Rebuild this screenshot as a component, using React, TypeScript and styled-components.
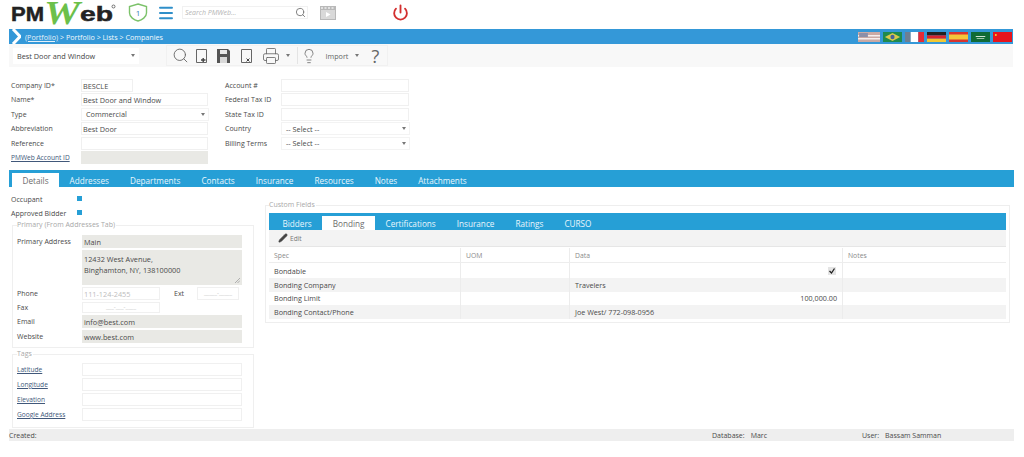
import React from "react";
import styled, { createGlobalStyle } from "styled-components";
import { Search, Menu, Power, Pencil, Printer, Lightbulb } from "lucide-react";

const GlobalStyle = createGlobalStyle`
  html, body {
    margin: 0;
    padding: 0;
    background: #fff;
  }
  body {
    font-family: "Open Sans", "Liberation Sans", sans-serif;
    font-size: 7.2px;
    color: #4a4a4a;
  }
`;

const Page = styled.div`
  width: 1024px;
  height: 457px;
  overflow: hidden;
  display: flex;
  flex-direction: column;
`;

const Header = styled.header`
  height: 29px;
  box-sizing: border-box;
  display: flex;
  align-items: center;
  padding: 0 0 4px 10px;
`;

const Logo = styled.svg`
  width: 106px;
  height: 27px;
  flex: none;
  overflow: visible;
`;

const ShieldBox = styled.svg`
  width: 20px;
  height: 19px;
  margin-left: 12px;
  flex: none;
`;

const MenuIcon = styled(Menu)`
  width: 18px;
  height: 18px;
  margin-left: 9px;
  color: #2f8fc9;
  flex: none;
`;

const SearchBox = styled.div`
  width: 126px;
  height: 13px;
  margin-left: 7px;
  display: flex;
  align-items: center;
  justify-content: space-between;
  padding-left: 2px;
  box-sizing: border-box;
  border: 1px solid #f1f1f1;
  font-style: italic;
  color: #b5b5b5;
  font-size: 7px;
  svg {
    width: 11px;
    height: 11px;
    color: #777;
    margin-right: 1px;
  }
`;

const Film = styled.svg`
  width: 16px;
  height: 14px;
  margin-left: 12px;
  flex: none;
`;

const PowerIcon = styled(Power)`
  width: 17px;
  height: 17px;
  margin-left: 56px;
  color: #d32f2f;
  stroke-width: 2.6;
  flex: none;
`;

const Crumbs = styled.div`
  height: 15px;
  margin: 0 11px 0 9px;
  background: #3498d8;
  display: flex;
  align-items: center;
  color: #f2f8fc;
  font-size: 7.2px;
  svg {
    flex: none;
  }
`;

const CrumbText = styled.span`
  margin-left: 4px;
  flex: 1;
  u {
    color: #e4f0f9;
  }
`;

const Flags = styled.div`
  display: flex;
  gap: 3px;
  margin-right: 1px;
`;

const FlagSvg = styled.svg<{ $wide?: boolean }>`
  width: ${(p) => (p.$wide ? 22 : 19)}px;
  height: 10px;
  display: block;
`;

const ToolRow = styled.div`
  height: 23px;
  margin: 0 11px 0 9px;
  background: #f8f8f8;
  display: flex;
  align-items: center;
`;

const RecordSelect = styled.div`
  width: 126px;
  height: 16px;
  margin-left: 4px;
  box-sizing: border-box;
  background: #fff;
  padding: 0 4px;
  display: flex;
  align-items: center;
  justify-content: space-between;
  color: #444;
  font-size: 7.3px;
`;

const Caret = styled.i`
  width: 0;
  height: 0;
  border-left: 2.5px solid transparent;
  border-right: 2.5px solid transparent;
  border-top: 3px solid #777;
  flex: none;
`;

const IconGroup = styled.div`
  margin-left: 27px;
  width: 222px;
  height: 21px;
  border: 1px solid #f1f1f1;
  box-sizing: border-box;
  display: flex;
  align-items: center;
  padding-left: 5px;
  color: #666;
  svg {
    flex: none;
  }
`;

const ToolIcon = styled.span<{ $gap: number }>`
  display: flex;
  align-items: center;
  margin-left: ${(p) => p.$gap}px;
`;

const ToolDivider = styled.span`
  width: 1px;
  height: 17px;
  background: #e4e4e4;
  margin-left: 7px;
`;

const Help = styled.span`
  margin-left: 12px;
  font-size: 18px;
  line-height: 18px;
  color: #666;
`;

const FormGrid = styled.div`
  margin: 12px 0 0 11px;
  display: flex;
  height: 85px;
`;

const FormColumn = styled.div<{ $width: number }>`
  width: ${(p) => p.$width}px;
  display: flex;
  flex-direction: column;
  gap: 1.4px;
`;

const Row = styled.div<{ $label: number }>`
  display: grid;
  grid-template-columns: ${(p) => p.$label}px auto;
  justify-content: start;
  align-items: center;
  height: 13px;
`;

const Label = styled.span`
  white-space: nowrap;
  color: #4a4a4a;
  font-size: 7px;
`;

const LinkLabel = styled.span`
  white-space: nowrap;
  text-decoration: underline;
  color: #41587a;
  font-size: 6.6px;
`;

const Field = styled.div<{ $width: number; $filled?: boolean; $height?: number }>`
  width: ${(p) => p.$width}px;
  height: ${(p) => p.$height ?? 13}px;
  box-sizing: border-box;
  border: 1px solid ${(p) => (p.$filled ? "#e9e9e5" : "#f0f0f0")};
  background: ${(p) => (p.$filled ? "#e9e9e5" : "#fff")};
  padding: 0 1px;
  display: flex;
  align-items: center;
  justify-content: space-between;
  white-space: nowrap;
  color: #4a4a4a;
  font-size: 7.3px;
`;

const SelectField = styled(Field)`
  padding: 0 3px 0 4px;
  border-color: #f3f3f3;
`;

const Muted = styled.span`
  color: #bdbdbd;
`;

const Mask = styled(Muted)`
  line-height: 7px;
  font-size: 6px;
  margin: 0 auto;
`;

const TextArea = styled(Field)`
  position: relative;
  display: block;
  line-height: 10.5px;
  padding-top: 3px;
  white-space: pre-line;
`;

const Grip = styled.svg`
  position: absolute;
  right: 1px;
  bottom: 1px;
  width: 5px;
  height: 5px;
`;

const MainTabs = styled.nav`
  height: 17px;
  margin: 6px 10px 0 9px;
  padding-left: 3px;
  background: #269fd6;
  display: flex;
  align-items: flex-end;
`;

const Tab = styled.span<{ $active?: boolean }>`
  height: 14px;
  padding: 0 10.5px;
  display: flex;
  align-items: center;
  font-size: 8.2px;
  color: ${(p) => (p.$active ? "#6d6d6d" : "#eaf6fc")};
  background: ${(p) => (p.$active ? "#fff" : "transparent")};
`;

const Body = styled.div`
  display: flex;
  flex: 1;
  min-height: 0;
`;

const LeftPane = styled.div`
  width: 265px;
  padding: 5px 0 0 11px;
  box-sizing: border-box;
  flex: none;
`;

const CheckRow = styled.div`
  height: 14px;
  display: grid;
  grid-template-columns: 66px auto;
  justify-content: start;
  align-items: center;
`;

const BlueBox = styled.i`
  width: 5px;
  height: 5px;
  background: #269fd6;
  margin-top: -2px;
`;

const Group = styled.fieldset<{ $height: number; $top: number }>`
  margin: 1px 0 2px 1px;
  padding: ${(p) => p.$top}px 0 0 4px;
  width: 242px;
  height: ${(p) => p.$height}px;
  box-sizing: border-box;
  border: 1px solid #efefef;
  display: flex;
  flex-direction: column;
  gap: 2px;
`;

const Legend = styled.legend`
  padding: 0 1px 0 0;
  margin-left: 0;
  line-height: 8px;
  color: #a8a8a8;
  font-size: 7px;
`;

const GroupRow = styled.div<{ $height?: number }>`
  display: flex;
  align-items: center;
  height: ${(p) => p.$height ?? 13}px;
`;

const GroupLabel = styled.span`
  width: 65px;
  flex: none;
  color: #4a4a4a;
  font-size: 7px;
`;

const GroupLink = styled(GroupLabel)`
  text-decoration: underline;
  color: #41587a;
  font-size: 6.6px;
`;

const ExtLabel = styled.span`
  width: 23px;
  margin-left: 14px;
  flex: none;
  font-size: 7px;
`;

const RightPane = styled.div`
  flex: 1;
  padding-top: 14px;
`;

const CustomFields = styled.fieldset`
  margin: 0;
  padding: 4px 3px 3px;
  width: 745px;
  box-sizing: border-box;
  border: 1px solid #eeeeee;
`;

const InnerTabs = styled.nav`
  height: 17px;
  padding-left: 3px;
  background: #269fd6;
  display: flex;
  align-items: flex-end;
`;

const EditBar = styled.div`
  height: 17px;
  box-sizing: border-box;
  background: #f3f3f3;
  border-bottom: 1px solid #e6e6e6;
  display: flex;
  align-items: center;
  padding-left: 9px;
  gap: 2px;
  color: #777;
  font-size: 6.6px;
  svg {
    width: 10px;
    height: 10px;
    color: #444;
    fill: #444;
  }
`;

const SpecRow = styled.div<{ $shade?: boolean; $head?: boolean; $height: number }>`
  display: grid;
  grid-template-columns: 192px 109px 273px 1fr;
  box-sizing: border-box;
  height: ${(p) => p.$height}px;
  margin-top: ${(p) => (p.$head ? 1 : 0)}px;
  background: ${(p) => (p.$shade ? "#f3f3f3" : "#fff")};
  color: ${(p) => (p.$head ? "#8a8a8a" : "#4a4a4a")};
  font-size: ${(p) => (p.$head ? 6.8 : 7.2)}px;
  border-bottom: ${(p) => (p.$head ? "1px solid #ededed" : "none")};
`;

const SpecCell = styled.div<{ $right?: boolean }>`
  display: flex;
  align-items: center;
  justify-content: ${(p) => (p.$right ? "flex-end" : "flex-start")};
  padding: 0 5px;
  border-right: 1px solid #ececec;
  white-space: nowrap;
  &:last-child {
    border-right: none;
  }
`;

const Tick = styled.svg`
  width: 8px;
  height: 8px;
  margin-right: 1px;
`;

const Footer = styled.footer`
  height: 12px;
  margin: 0 10px 16px 9px;
  background: #eeeeee;
  display: grid;
  grid-template-columns: 703px 150px 1fr;
  align-items: center;
  flex: none;
  color: #4a4a4a;
  font-size: 7px;
`;

const FooterPair = styled.span<{ $gap: number }>`
  display: flex;
  gap: ${(p) => p.$gap}px;
`;

const leftRows = [
  { label: "Company ID*", value: "BESCLE", width: 52 },
  { label: "Name*", value: "Best Door and Window", width: 127 },
];

const mainTabs = ["Details", "Addresses", "Departments", "Contacts", "Insurance", "Resources", "Notes", "Attachments"];
const innerTabs = ["Bidders", "Bonding", "Certifications", "Insurance", "Ratings", "CURSO"];

const DocIcon = ({ mark }: { mark: "plus" | "x" }) => (
  <svg width="13" height="16" viewBox="0 0 13 16" fill="none" stroke="#666" strokeWidth="1">
    <path d="M1.5 1.5h10v13h-10z" />
    {mark === "plus" ? <path d="M6 12h4.5M8.2 10v4" strokeWidth="1.4" stroke="#444" /> : <path d="M6.5 10.5l3 3M9.5 10.5l-3 3" stroke="#444" />}
  </svg>
);

const SaveIcon = () => (
  <svg width="13" height="14" viewBox="0 0 13 14">
    <path d="M0 0h11l2 2v12H0z" fill="#555" />
    <path d="M3 1h7v4H3z" fill="#e8e8e8" />
    <path d="M3 8h7v6H3z" fill="#d8d8d8" />
  </svg>
);

const Flag = ({ children, wide }: { children: React.ReactNode; wide?: boolean }) => (
  <FlagSvg $wide={wide} viewBox="0 0 20 10" preserveAspectRatio="none">
    {children}
  </FlagSvg>
);

const App = () => {
  return (
    <Page>
      <GlobalStyle />
      <Header>
        <Logo viewBox="0 0 106 27">
          <text x="1" y="22" fontFamily="Liberation Sans" fontWeight="700" fontSize="21" fill="#222" stroke="#222" strokeWidth="0.5" textLength="33" lengthAdjust="spacingAndGlyphs">PM</text>
          <text x="34" y="25" fontFamily="Liberation Serif" fontStyle="italic" fontWeight="700" fontSize="33" fill="#6cc04a" textLength="36" lengthAdjust="spacingAndGlyphs">W</text>
          <text x="70" y="22" fontFamily="Liberation Sans" fontWeight="700" fontSize="21" fill="#222" stroke="#222" strokeWidth="0.5" textLength="33" lengthAdjust="spacingAndGlyphs">eb</text>
          <circle cx="103.5" cy="7.5" r="1.5" fill="none" stroke="#222" strokeWidth="0.6" />
        </Logo>
        <ShieldBox viewBox="0 0 20 19">
          <path d="M10 1 L18.5 3.5 V10 C18.5 14 14 17 10 18 C6 17 1.5 14 1.5 10 V3.5 Z" fill="#fff" stroke="#7cc26a" strokeWidth="1.4" />
          <text x="10" y="13" textAnchor="middle" fontFamily="Open Sans" fontSize="8" fill="#3a7fb5">1</text>
        </ShieldBox>
        <MenuIcon strokeWidth={2.6} />
        <SearchBox>
          Search PMWeb...
          <Search />
        </SearchBox>
        <Film viewBox="0 0 16 14">
          <path d="M0 0h16v14H0z" fill="#b9b9b9" />
          <path d="M1 1.2h2v1.6H1zM4.5 1.2h2v1.6h-2zM8 1.2h2v1.6H8zM11.5 1.2h2v1.6h-2z" fill="#eee" />
          <path d="M1 4h14v9H1z" fill="#d9d9d9" />
          <path d="M6 6l4.5 2.5L6 11z" fill="#fff" />
        </Film>
        <PowerIcon />
      </Header>

      <Crumbs>
        <svg width="12" height="15" viewBox="0 0 12 15">
          <path d="M4 0l7 7.5L4 15" fill="none" stroke="#fff" strokeWidth="3" />
        </svg>
        <CrumbText>
          <u>(Portfolio)</u> &gt; Portfolio &gt; Lists &gt; Companies
        </CrumbText>
        <Flags>
          <Flag wide>
            <path d="M0 0h20v10H0z" fill="#c9a9a4" />
            <path d="M0 3h20v1.4H0zM0 6h20v1.4H0z" fill="#f4eeee" />
            <path d="M1 1h8v4H1z" fill="#8c8fa8" />
          </Flag>
          <Flag>
            <path d="M0 0h20v10H0z" fill="#1f8a4c" />
            <path d="M10 1l8 4-8 4-8-4z" fill="#d8c94a" />
            <circle cx="10" cy="5" r="2.2" fill="#46629a" />
          </Flag>
          <Flag>
            <path d="M0 0h6v10H0z" fill="#6d7f92" />
            <path d="M6 0h8v10H6z" fill="#fff" />
            <path d="M14 0h6v10h-6z" fill="#e52b36" />
          </Flag>
          <Flag>
            <path d="M0 0h20v3.4H0z" fill="#222" />
            <path d="M0 3.4h20v3.3H0z" fill="#d8242c" />
            <path d="M0 6.7h20V10H0z" fill="#f2c832" />
          </Flag>
          <Flag>
            <path d="M0 0h20v10H0z" fill="#d8342f" />
            <path d="M0 2.5h20v5H0z" fill="#f4c73a" />
          </Flag>
          <Flag>
            <path d="M0 0h20v10H0z" fill="#0f6b36" />
            <path d="M5 4h10v1H5zM6 6h8v.8H6z" fill="#cfe3d4" />
          </Flag>
          <Flag>
            <path d="M0 0h20v10H0z" fill="#e8141c" />
            <circle cx="3" cy="3" r="1" fill="#f6d92c" />
          </Flag>
        </Flags>
      </Crumbs>

      <ToolRow>
        <RecordSelect>
          Best Door and Window
          <Caret />
        </RecordSelect>
        <IconGroup>
          <Search size={17} strokeWidth={1.3} />
          <ToolIcon $gap={6}><DocIcon mark="plus" /></ToolIcon>
          <ToolIcon $gap={9}><SaveIcon /></ToolIcon>
          <ToolIcon $gap={10}><DocIcon mark="x" /></ToolIcon>
          <ToolIcon $gap={8.5}><Printer size={18} strokeWidth={1.1} /></ToolIcon>
          <ToolIcon $gap={6}><Caret /></ToolIcon>
          <ToolDivider />
          <ToolIcon $gap={3}><Lightbulb size={16} strokeWidth={1.2} /></ToolIcon>
          <ToolIcon $gap={9}>Import</ToolIcon>
          <ToolIcon $gap={7}><Caret /></ToolIcon>
          <Help>?</Help>
        </IconGroup>
      </ToolRow>

      <FormGrid>
        <FormColumn $width={214}>
          {leftRows.map((row) => (
            <Row key={row.label} $label={70}>
              <Label>{row.label}</Label>
              <Field $width={row.width}>{row.value}</Field>
            </Row>
          ))}
          <Row $label={70}>
            <Label>Type</Label>
            <SelectField $width={128}>Commercial<Caret /></SelectField>
          </Row>
          <Row $label={70}>
            <Label>Abbreviation</Label>
            <Field $width={127}>Best Door</Field>
          </Row>
          <Row $label={70}>
            <Label>Reference</Label>
            <Field $width={127} />
          </Row>
          <Row $label={70}>
            <LinkLabel>PMWeb Account ID</LinkLabel>
            <Field $width={127} $filled />
          </Row>
        </FormColumn>
        <FormColumn $width={190}>
          {["Account #", "Federal Tax ID", "State Tax ID"].map((label) => (
            <Row key={label} $label={56}>
              <Label>{label}</Label>
              <Field $width={128} />
            </Row>
          ))}
          {["Country", "Billing Terms"].map((label) => (
            <Row key={label} $label={56}>
              <Label>{label}</Label>
              <SelectField $width={129}>-- Select --<Caret /></SelectField>
            </Row>
          ))}
        </FormColumn>
      </FormGrid>

      <MainTabs>
        {mainTabs.map((tab, i) => (
          <Tab key={tab} $active={i === 0}>{tab}</Tab>
        ))}
      </MainTabs>

      <Body>
        <LeftPane>
          <CheckRow><Label>Occupant</Label><BlueBox /></CheckRow>
          <CheckRow><Label>Approved Bidder</Label><BlueBox /></CheckRow>
          <Group $height={127} $top={6}>
            <Legend>Primary (From Addresses Tab)</Legend>
            <GroupRow>
              <GroupLabel>Primary Address</GroupLabel>
              <Field $width={160} $filled>Main</Field>
            </GroupRow>
            <GroupRow $height={35}>
              <GroupLabel />
              <TextArea $width={160} $height={35} $filled>
                {"12432 West Avenue,\nBinghamton, NY, 138100000"}
                <Grip viewBox="0 0 5 5">
                  <path d="M0 5l5-5M2.5 5L5 2.5" stroke="#888" strokeWidth="0.6" />
                </Grip>
              </TextArea>
            </GroupRow>
            <GroupRow>
              <GroupLabel>Phone</GroupLabel>
              <Field $width={78}><Muted>111-124-2455</Muted></Field>
              <ExtLabel>Ext</ExtLabel>
              <Field $width={42}><Mask>_____-_____</Mask></Field>
            </GroupRow>
            <GroupRow $height={11}>
              <GroupLabel>Fax</GroupLabel>
              <Field $width={78} $height={11}><Mask>___-___-____</Mask></Field>
            </GroupRow>
            <GroupRow>
              <GroupLabel>Email</GroupLabel>
              <Field $width={160} $filled>info@best.com</Field>
            </GroupRow>
            <GroupRow>
              <GroupLabel>Website</GroupLabel>
              <Field $width={160} $filled>www.best.com</Field>
            </GroupRow>
          </Group>
          <Group $height={78} $top={5}>
            <Legend>Tags</Legend>
            {["Latitude", "Longitude", "Elevation", "Google Address"].map((label) => (
              <GroupRow key={label}>
                <GroupLink>{label}</GroupLink>
                <Field $width={160} />
              </GroupRow>
            ))}
          </Group>
        </LeftPane>

        <RightPane>
          <CustomFields>
            <Legend>Custom Fields</Legend>
            <InnerTabs>
              {innerTabs.map((tab, i) => (
                <Tab key={tab} $active={i === 1}>{tab}</Tab>
              ))}
            </InnerTabs>
            <EditBar>
              <Pencil strokeWidth={1.5} />
              Edit
            </EditBar>
            <SpecRow $head $height={15}>
              <SpecCell>Spec</SpecCell>
              <SpecCell>UOM</SpecCell>
              <SpecCell>Data</SpecCell>
              <SpecCell>Notes</SpecCell>
            </SpecRow>
            <SpecRow $height={15}>
              <SpecCell>Bondable</SpecCell>
              <SpecCell />
              <SpecCell $right>
                <Tick viewBox="0 0 8 8">
                  <path d="M0 0h8v8H0z" fill="#e4e4e4" />
                  <path d="M1.5 4l2 2 3-4.5" fill="none" stroke="#222" strokeWidth="1.3" />
                </Tick>
              </SpecCell>
              <SpecCell />
            </SpecRow>
            <SpecRow $shade $height={13.5}>
              <SpecCell>Bonding Company</SpecCell>
              <SpecCell />
              <SpecCell>Travelers</SpecCell>
              <SpecCell />
            </SpecRow>
            <SpecRow $height={13.5}>
              <SpecCell>Bonding Limit</SpecCell>
              <SpecCell />
              <SpecCell $right>100,000.00</SpecCell>
              <SpecCell />
            </SpecRow>
            <SpecRow $shade $height={14}>
              <SpecCell>Bonding Contact/Phone</SpecCell>
              <SpecCell />
              <SpecCell>Joe West/ 772-098-0956</SpecCell>
              <SpecCell />
            </SpecRow>
          </CustomFields>
        </RightPane>
      </Body>

      <Footer>
        <span>Created:</span>
        <FooterPair $gap={6}><span>Database:</span><span>Marc</span></FooterPair>
        <FooterPair $gap={6}><span>User:</span><span>Bassam Samman</span></FooterPair>
      </Footer>
    </Page>
  );
};

export default App;
